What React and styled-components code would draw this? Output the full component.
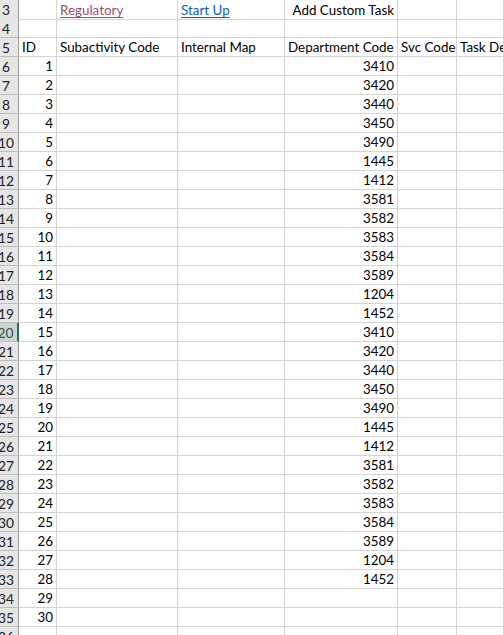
import styled, { createGlobalStyle } from 'styled-components';

const GlobalStyle = createGlobalStyle`
  html, body {
    margin: 0;
    padding: 0;
    background: #ffffff;
    overflow: hidden;
  }
`;

const Sheet = styled.div`
  display: grid;
  grid-template-columns: 19px 38px 121px 107px 113px 59px 1fr;
  grid-auto-rows: 19px;
  width: 504px;
  font-family: Lato, 'Liberation Sans', sans-serif;
  font-size: 13.4px;
  color: #000;
`;

const RowHead = styled.div`
  box-sizing: border-box;
  display: flex;
  align-items: center;
  justify-content: center;
  padding-right: 6px;
  overflow: hidden;
  white-space: nowrap;
  font-size: 13.8px;
  background: ${(p) => (p.$active ? '#d2d2d2' : '#e6e6e6')};
  color: ${(p) => (p.$active ? '#215a36' : '#222')};
  border-bottom: 1px solid #bdbdbd;
  border-right: ${(p) => (p.$active ? '2px solid #217346' : '1px solid #9e9e9e')};
  height: ${(p) => (p.$first ? '20px' : '19px')};
`;

const Cell = styled.div`
  box-sizing: border-box;
  display: flex;
  align-items: flex-end;
  justify-content: ${(p) => (p.$num ? 'flex-end' : 'flex-start')};
  padding: 0 3px 1px 3px;
  overflow: ${(p) => (p.$spill ? 'visible' : 'hidden')};
  white-space: nowrap;
  border-right: 1px solid #d4d4d4;
  border-bottom: 1px solid #d4d4d4;
  height: ${(p) => (p.$first ? '20px' : '19px')};
`;

const Link = styled.span`
  text-decoration: underline;
  text-underline-offset: 2px;
  color: ${(p) => (p.$visited ? '#954f72' : '#0563c1')};
`;

const codes = [
  3410, 3420, 3440, 3450, 3490, 1445, 1412, 3581, 3582, 3583, 3584, 3589, 1204, 1452,
  3410, 3420, 3440, 3450, 3490, 1445, 1412, 3581, 3582, 3583, 3584, 3589, 1204, 1452,
];

function buildRows() {
  const rows = [
    { n: 3, cells: ['', <Link $visited>Regulatory</Link>, <Link>Start Up</Link>, 'Add Custom Task', '', ''] },
    { n: 4, cells: ['', '', '', '', '', ''] },
    { n: 5, cells: ['ID', 'Subactivity Code', 'Internal Map', 'Department Code', 'Svc Code', 'Task Description'] },
  ];
  for (let i = 1; i <= 31; i++) {
    rows.push({
      n: i + 5,
      cells: [i <= 30 ? i : '', '', '', codes[i - 1] || '', '', ''],
    });
  }
  return rows;
}

export default function App() {
  const rows = buildRows();
  return (
    <>
      <GlobalStyle />
      <Sheet>
        {rows.map((row, ri) => (
          <Row key={row.n} row={row} first={ri === 0} />
        ))}
      </Sheet>
    </>
  );
}

function Row({ row, first }) {
  const isHeader = row.n === 5;
  return (
    <>
      <RowHead $active={row.n === 20} $first={first}>
        {row.n}
      </RowHead>
      {row.cells.map((c, ci) => (
        <Cell
          key={ci}
          $first={first}
          $num={!isHeader && (ci === 0 || ci === 3)}
          $spill={row.n === 3 && ci === 3}
        >
          {c}
        </Cell>
      ))}
    </>
  );
}
